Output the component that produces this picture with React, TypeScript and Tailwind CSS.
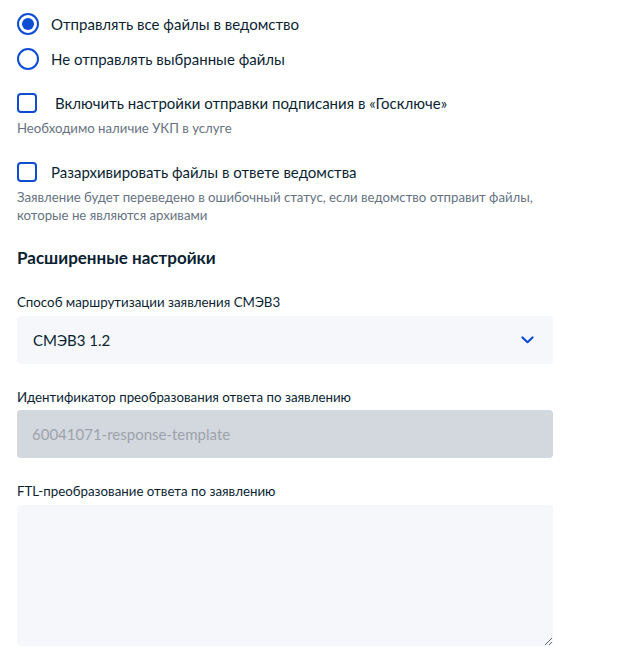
import { useState } from 'react';

const FONT = "font-['Lato','Noto_Sans',sans-serif]";

function Radio({ checked, label, onClick }: { checked: boolean; label: string; onClick: () => void }) {
  return (
    <div className="flex h-6 items-center gap-3 cursor-pointer" onClick={onClick}>
      <span className="flex h-[22px] w-[22px] shrink-0 items-center justify-center rounded-full border-2 border-[#0d4cd3]">
        {checked && <span className="h-[12px] w-[12px] rounded-full bg-[#0d4cd3]" />}
      </span>
      <span className="text-[15px] leading-6">{label}</span>
    </div>
  );
}

function Checkbox({ label, gap }: { label: string; gap: string }) {
  return (
    <label className={`flex h-6 items-center cursor-pointer ${gap}`}>
      <span className="h-[20px] w-[20px] shrink-0 rounded-[4px] border-2 border-[#0d4cd3] bg-white" />
      <span className="text-[15px] leading-6">{label}</span>
    </label>
  );
}

export default function App() {
  const [mode, setMode] = useState<'all' | 'none'>('all');

  return (
    <div className={`h-[668px] w-[624px] bg-white pl-[17px] pt-3 text-[#0b1f33] ${FONT}`}>
      <div className="w-[536px]">
        {/* Send mode */}
        <Radio checked={mode === 'all'} label="Отправлять все файлы в ведомство" onClick={() => setMode('all')} />
        <div className="mt-[11px]">
          <Radio checked={mode === 'none'} label="Не отправлять выбранные файлы" onClick={() => setMode('none')} />
        </div>

        {/* Options */}
        <div className="mt-5">
          <Checkbox label="Включить настройки отправки подписания в «Госключе»" gap="gap-[18px]" />
        </div>
        <p className="mt-1 text-[13.2px] leading-[18px] text-[#66727f]">Необходимо наличие УКП в услуге</p>

        <div className="mt-[23px]">
          <Checkbox label="Разархивировать файлы в ответе ведомства" gap="gap-[14px]" />
        </div>
        <p className="mt-1 text-[13.2px] leading-[18px] text-[#66727f]">
          Заявление будет переведено в ошибочный статус, если ведомство отправит файлы, которые не являются архивами
        </p>

        {/* Advanced */}
        <h3 className="mt-[22px] text-[17px] font-bold leading-6">Расширенные настройки</h3>

        <div className="mt-[23px] text-[13.3px] leading-[18px]">Способ маршрутизации заявления СМЭВ3</div>
        <div className="mt-[5px] flex h-12 items-center justify-between rounded-[4px] bg-[#f5f7fa] pl-4 pr-[19px]">
          <span className="text-[15px]">СМЭВ3 1.2</span>
          <svg width="13" height="8" viewBox="0 0 13 8" fill="none">
            <path d="M1.5 1.5L6.5 6.2L11.5 1.5" stroke="#0d4cd3" strokeWidth="2.2" strokeLinecap="round" strokeLinejoin="round" />
          </svg>
        </div>

        <div className="mt-6 text-[13.3px] leading-[18px]">Идентификатор преобразования ответа по заявлению</div>
        <div className="mt-1 flex h-12 items-center rounded-[4px] bg-[#d3d7de] px-[15px]">
          <span className="text-[15px] text-[#9da3ab]">60041071-response-template</span>
        </div>

        <div className="mt-6 text-[13.3px] leading-[18px]">FTL-преобразование ответа по заявлению</div>
        <textarea className="mt-[5px] block h-[141px] w-full rounded-[4px] bg-[#f5f7fa] p-3 text-[15px] outline-none" />
      </div>
    </div>
  );
}
